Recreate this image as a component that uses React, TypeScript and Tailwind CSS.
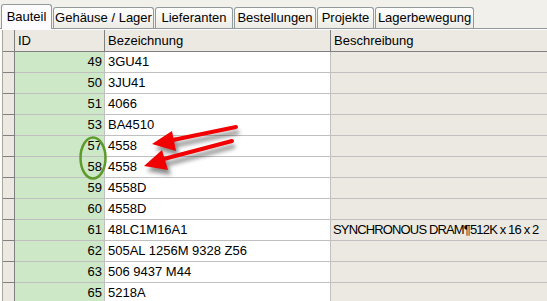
import React from 'react';

const tabs = [
  { label: 'Bauteil', w: 'w-[51px]' },
  { label: 'Gehäuse / Lager', w: 'w-[101px]' },
  { label: 'Lieferanten', w: 'w-[78px]' },
  { label: 'Bestellungen', w: 'w-[82px]' },
  { label: 'Projekte', w: 'w-[57px]' },
  { label: 'Lagerbewegung', w: 'w-[99px]' },
];

const rows: [number, string, string][] = [
  [49, '3GU41', ''],
  [50, '3JU41', ''],
  [51, '4066', ''],
  [53, 'BA4510', ''],
  [57, '4558', ''],
  [58, '4558', ''],
  [59, '4558D', ''],
  [60, '4558D', ''],
  [61, '48LC1M16A1', 'SYNCHRONOUS DRAM¶512K x 16 x 2'],
  [62, '505AL 1256M 9328 Z56', ''],
  [63, '506 9437 M44', ''],
  [65, '5218A', ''],
];

const Annotations: React.FC = () => (
  <svg className="absolute left-0 top-0 pointer-events-none" width={547} height={301} viewBox="0 0 547 301">
    <defs>
      <filter id="sh" x="-20%" y="-50%" width="140%" height="200%">
        <feGaussianBlur stdDeviation="2.2" />
      </filter>
    </defs>
    {/* shadows */}
    <g opacity={0.45} filter="url(#sh)" transform="translate(3,5)">
      <line x1={236} y1={127} x2={168} y2={141} stroke="#000" strokeWidth={4} />
      <polygon points="152,144 172,131 176,151" fill="#000" />
      <line x1={232} y1={141} x2={160} y2={160} stroke="#000" strokeWidth={4} />
      <polygon points="144,166 162,150 168,170" fill="#000" />
    </g>
    <g>
      <line x1={236} y1={127} x2={168} y2={141} stroke="#f20000" strokeWidth={4} strokeLinecap="round" />
      <polygon points="152,144 172,131 176,151" fill="#f20000" />
      <line x1={232} y1={141} x2={160} y2={160} stroke="#f20000" strokeWidth={4} strokeLinecap="round" />
      <polygon points="144,166 162,150 168,170" fill="#f20000" />
    </g>
    <ellipse cx={93} cy={158} rx={12.5} ry={20.5} fill="none" stroke="#5f9a2c" strokeWidth={2.5} />
  </svg>
);

export default function App() {
  return (
    <div className="relative w-[547px] h-[301px] overflow-hidden bg-[#f1f0ea] font-['Liberation_Sans',sans-serif] text-[13px] text-black">
      {/* tab strip */}
      <div className="flex items-end h-[28px] pl-[1px]">
        {tabs.map((t, i) => (
          <div
            key={t.label}
            className={
              i === 0
                ? `${t.w} h-[25px] -mb-[1px] z-10 flex items-center justify-center rounded-t-[3px] border border-b-0 border-[#919b9c] bg-[#fcfcfe] pb-[1px]`
                : `${t.w} h-[21px] ml-[1px] flex items-center justify-center rounded-t-[3px] border border-b-0 border-[#919b9c] bg-gradient-to-b from-[#ffffff] to-[#ecebe5]`
            }
          >
            {t.label}
          </div>
        ))}
      </div>
      {/* tab panel */}
      <div className="border-t border-[#919b9c] bg-[#fcfcfe] pt-[1px] pl-[2px] h-full">
        <div className="border-l border-[#aca899] bg-[#ece9e2] h-full">
          {/* header */}
          <div className="flex h-[22px] border-b border-[#808080] bg-[#ece9e2]">
            <div className="w-[12px] border-r border-[#808080]" />
            <div className="w-[90px] border-r border-[#808080] pl-[3px] flex items-center">ID</div>
            <div className="w-[226px] border-r border-[#808080] pl-[3px] flex items-center">Bezeichnung</div>
            <div className="flex-1 pl-[3px] flex items-center">Beschreibung</div>
          </div>
          {rows.map(([id, name, desc]) => (
            <div key={id} className="flex h-[21px]">
              <div className="w-[12px] border-r border-b border-[#808080] bg-[#ece9e2]" />
              <div className="w-[90px] border-r border-b border-[#c0c0c0] bg-[#cde8c7] pr-[2px] flex items-center justify-end">
                {id}
              </div>
              <div className="w-[226px] border-r border-b border-[#c0c0c0] bg-white pl-[3px] flex items-center whitespace-nowrap">
                {name}
              </div>
              <div className="flex-1 min-w-0 border-b border-[#c0c0c0] bg-[#ece9e2] pl-[2px] flex items-center whitespace-nowrap overflow-hidden tracking-[-0.85px]">
                {desc}
              </div>
            </div>
          ))}
        </div>
      </div>
      <Annotations />
    </div>
  );
}
